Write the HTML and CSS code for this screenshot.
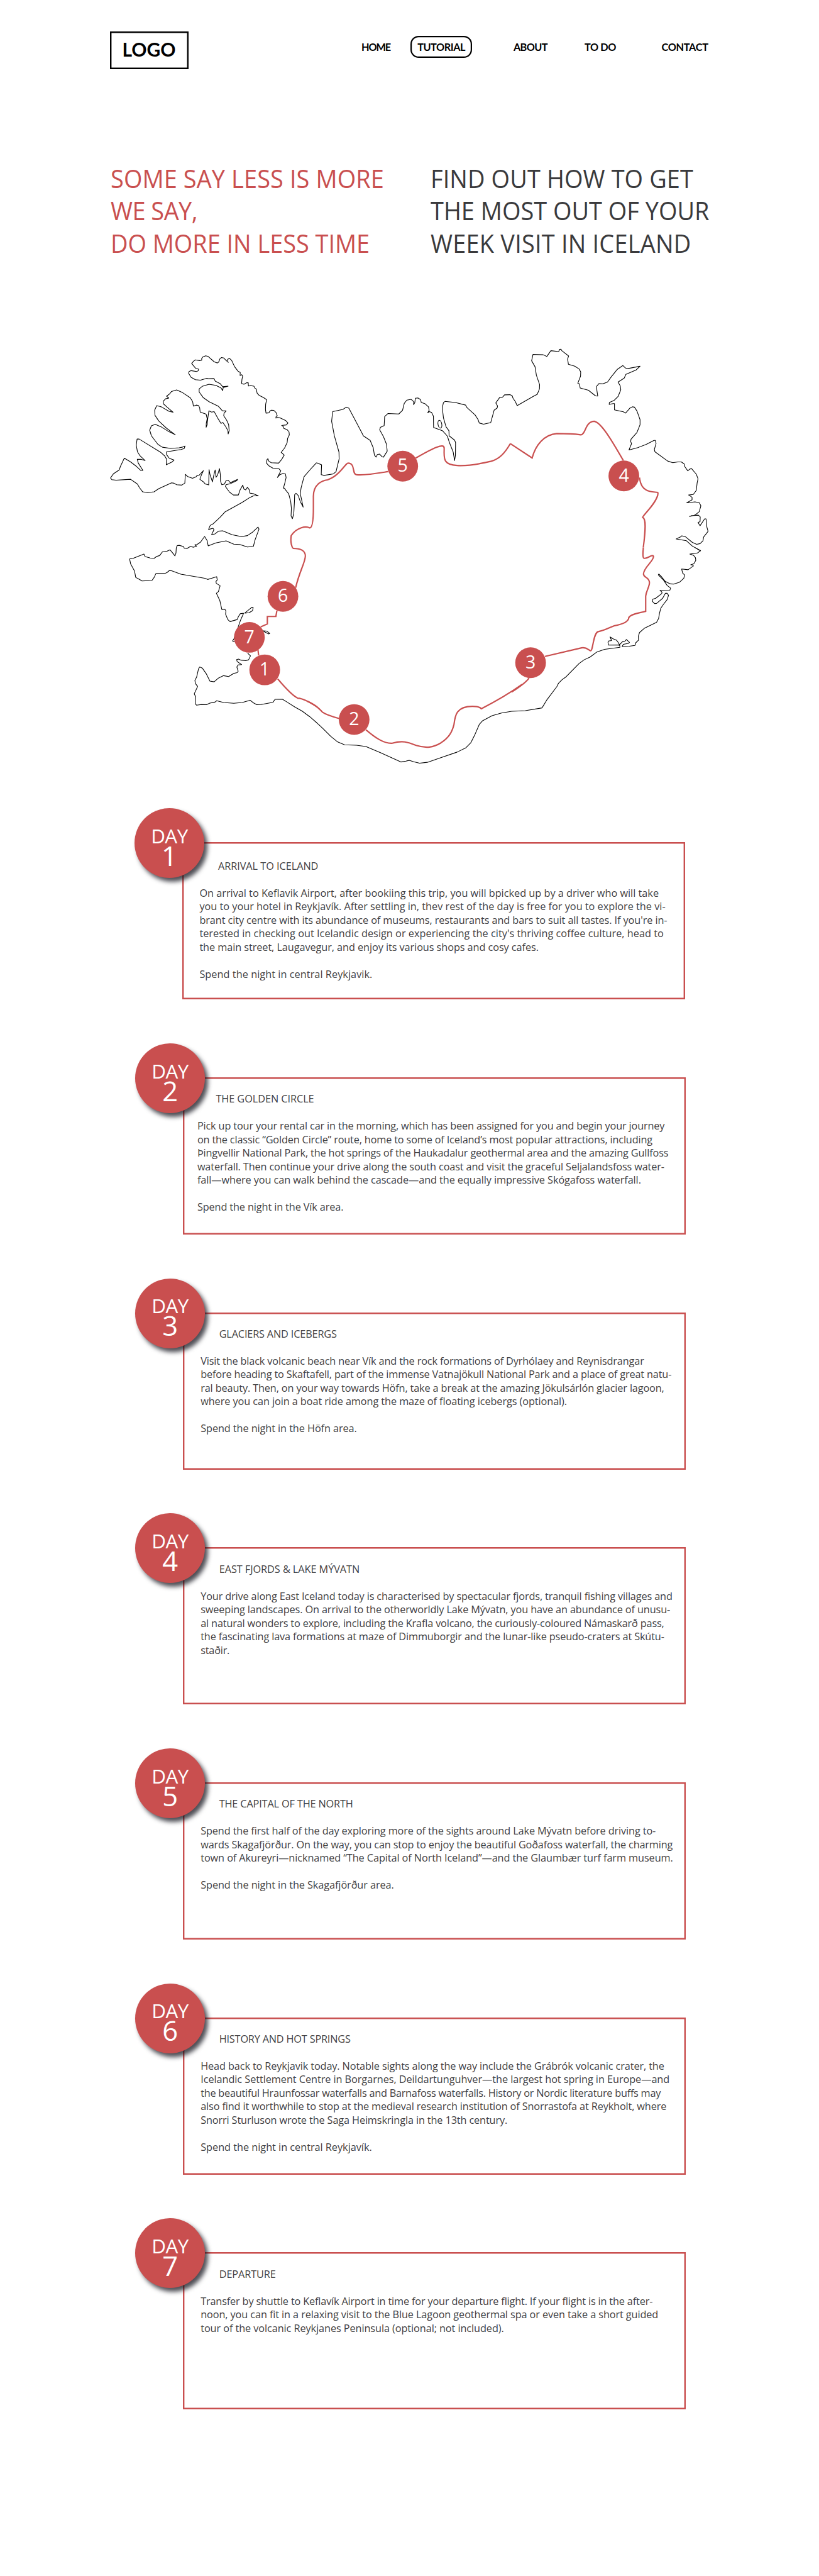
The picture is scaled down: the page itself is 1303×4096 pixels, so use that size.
FILE: index.html
```html
<!DOCTYPE html>
<html lang="en">
<head>
<meta charset="utf-8">
<title>Iceland in a week</title>
<link rel="stylesheet" href="styles.css">
</head>
<body>
<header class="top">
  <div class="logo">LOGO</div>
  <nav class="nav">
    <a class="home">HOME</a>
    <a class="pill">TUTORIAL</a>
    <a class="about">ABOUT</a>
    <a class="todo">TO DO</a>
    <a class="contact">CONTACT</a>
  </nav>
</header>
<section class="hero">
  <h1 class="claim"><span class="l1">SOME SAY LESS IS MORE</span><span class="l2">WE SAY,</span><span class="l3">DO MORE IN LESS TIME</span></h1>
  <p class="pitch"><span class="l1">FIND OUT HOW TO GET</span><span class="l2">THE MOST OUT OF YOUR</span><span class="l3">WEEK VISIT IN ICELAND</span></p>
</section>
<svg class="map" viewBox="0 0 3600 2550">
  <g class="coast">
    <path d="M1255,733 1225,765 1182,815 1165,880 1160,915 1168,950 1177,993 1160,960 1148,925 1135,912 1127,920 1126,960 1122,1030 1114,1061 1106,1045 1108,1000 1104,960 1092,915 1072,890 1068,882 1061,882 1070,850 1077,820 1073,798 1058,796 1040,803 1026,819 1037,798 1046,780 1035,768 1000,765 975,750 962,735 965,715 970,709 976,724 990,733 1033,735 1050,715 1066,688 1048,672 1068,647 1083,615 1086,590 1096,570 1094,552 1082,538 1064,532 1062,522 1051,514 1078,511 1088,500 1075,486 1040,469 1028,467 1017,471 1018,463 1025,458 1018,438 1005,426 990,425 980,432 977,440 959,442 956,420 957,390 963,363 945,351 918,337 907,325 902,300 895,297 888,284 870,281 856,283 855,264 845,264 830,273 816,268 818,245 822,225 817,217 807,221 808,204 795,196 775,170 757,132 745,121 735,126 730,137 738,144 725,133 712,119 698,116 689,123 682,142 674,148 655,141 620,110 605,106 588,113 582,121 582,132 570,134 545,130 535,137 523,151 547,180 564,184 561,194 552,198 520,193 508,198 505,208 520,232 545,246 575,249 612,238 620,241 655,240 661,254 690,269 705,287 737,284 708,292 705,310 695,294 665,279 625,273 585,285 567,300 567,318 590,350 625,375 680,402 703,428 725,429 713,443 711,457 728,483 740,510 743,545 737,564 736,545 722,520 706,497 695,502 680,478 655,433 640,436 624,429 618,470 614,510 608,525 609,500 614,475 608,448 573,436 570,410 563,397 550,395 533,401 529,375 515,352 470,322 435,306 405,315 395,328 376,343 389,354 370,358 356,373 358,388 380,408 414,437 390,431 345,405 318,398 306,425 308,455 330,488 375,530 427,569 405,558 385,548 345,523 310,508 287,516 277,542 287,575 325,625 352,642 400,649 450,645 470,641 484,635 479,650 460,655 375,669 376,685 392,707 420,717 410,727 374,745 376,712 365,693 343,673 215,594 203,594 198,630 205,668 220,692 250,720 228,713 204,713 210,735 237,778 225,778 200,755 165,728 128,706 105,755 98,775 65,797 47,822 55,832 80,835 165,830 205,858 218,880 235,903 265,908 303,903 330,885 405,851 420,853 435,862 465,864 483,852 486,801 500,814 528,824 548,816 556,806 568,805 592,779 580,805 571,830 592,845 602,857 623,863 625,773 630,800 645,845 652,810 661,775 666,818 675,805 686,767 691,800 692,840 700,862 715,858 725,838 737,835 750,850 792,830 788,838 750,855 725,862 721,872 745,905 768,922 797,922 807,892 823,864 830,888 840,892 850,877 860,890 865,911 885,914 914,927 885,927 865,936 820,965 720,1020 690,1052 650,1090 632,1100 622,1124 648,1117 654,1125 640,1154 660,1150 680,1134 705,1132 760,1155 815,1166 850,1160 880,1140 912,1110 918,1122 895,1185 885,1223 850,1227 805,1212 770,1210 725,1191 665,1203 620,1220 614,1190 599,1165 575,1198 555,1212 542,1214 552,1222 535,1228 515,1224 495,1236 480,1234 475,1224 450,1217 438,1219 433,1230 431,1262 425,1279 415,1266 396,1243"/>
    <path transform="translate(0 1230)" d="M396,13 380,21 352,25 335,47 318,52 303,63 280,61 250,53 243,38 180,63 159,67 165,95 188,138 195,175 215,186 232,196 290,193 303,175 313,153 365,153 380,145 392,135 405,136 460,156 600,180 617,187 640,180 670,171 673,190 665,200 668,210 690,224 680,258 668,268 688,310 700,363 718,362 724,372 722,390 735,422 748,434 790,422 797,405 808,388 828,385 M833,385 875,351 884,352 880,370 860,382 833,385 M828,385 810,425 795,468 771,535 763,548 775,553 M930,487 965,490 981,503 975,506 945,492 M851,618 868,635 857,658 840,663 812,660 798,654 787,657 790,668 816,686 795,688 788,700 796,725 790,733 770,738 740,756 710,751 680,765 655,787 630,783 610,742 585,706 570,700 563,712 552,760 542,778 545,797 558,814 538,858 547,875 544,915 552,924 580,920 610,921 630,912 660,906 670,898 710,908 770,913 820,908 866,895 885,910 905,921 930,920 1000,907 1012,890 1055,889 1080,904 1130,936 1170,958 1215,991 1260,1030"/>
    <path transform="translate(1200 1230)" d="M60,1030 90,1058 140,1108 180,1140 220,1156 290,1159 345,1166 430,1202 550,1257 580,1252 600,1247 625,1256 660,1264 705,1259 790,1230 880,1199 930,1175 960,1145 985,1095 1010,1037 1030,1015 1085,986 1140,970 1200,960 1280,956 1378,940"/>
    <path transform="translate(2400 1230)" d="M178,940 205,895 265,815 275,795 295,775 320,757 395,680 425,658 460,642 500,612 545,597 635,585 634,575 625,571 568,572 565,555 568,548 586,545 577,524 595,535 615,543 626,558 632,570 650,552 665,548 673,539 691,556 685,562 655,567 648,580 690,578 723,574 728,558 744,543 743,520 750,498 780,472 850,438 862,415 867,385 875,355 890,333 912,305 920,280 912,268 902,268 885,298 850,327 838,328 825,315 828,303 845,297 880,270 882,262 870,251 928,250 932,238 912,222 890,190 860,160 863,155 878,170 900,198 930,213 950,214 985,203 1010,180 1014,160 1003,150 997,126 1035,130 1066,108 1062,103 1050,101 1068,95 1080,75 1078,60 1067,46 1045,38 1090,32 1108,18 1075,0"/>
    <path transform="translate(2400 0)" d="M1108,1250 1075,1230 1060,1222 1025,1190 965,1180 990,1168 998,1161 1020,1167 1060,1200 1085,1211 1105,1207 1122,1190 1126,1168 1152,1135 1145,1110 1140,1062 1132,1062 1105,1102 1093,1083 1105,1078 1106,1050 1095,1040 1055,1043 1043,1048 1075,1040 1100,1020 1110,985 1100,967 1075,962 1027,968 1058,950 1058,935 1038,922 1065,919 1083,895 1088,850 1093,827 1083,800 1055,767 1045,770 1033,780 1015,755 1012,740 995,728 975,728 945,733 915,723 840,668 837,655 847,620 843,602 835,602 790,625 740,644 688,658 703,621 698,608 700,595 735,555 753,510 753,480 735,430 720,407 708,405 693,413 668,442 655,434 603,423 603,386 595,386 572,391 573,380 600,368 625,343 640,305 637,283 624,260 660,237 670,215 730,189 753,167 680,181 668,178 652,163 620,185 585,228 562,260 535,270 512,269 498,285 500,310 505,342 492,341 450,308 402,295 397,270 388,267 404,225 405,200 395,183 370,167 333,156 328,125 334,107 295,77 289,67 281,68 276,81 230,76 206,110 185,100 125,98 117,135 137,170 145,220 164,275 163,300 150,332 130,342 32,398"/>
    <path transform="translate(1200 0)" d="M1232,398 1222,375 1208,355 1203,340 1190,334 1158,335 1147,348 1130,350 1107,382 1117,400 1115,412 1097,425 1077,498 1035,507 1010,500 1003,480 985,452 938,410 930,395 870,380 810,373 800,380 793,410 800,470 815,522 832,545 833,575 865,600 871,615 870,690 865,720 857,670 835,615 823,577 795,546 742,526 741,460 730,438 717,433 708,440 716,425 712,405 690,386 670,380 665,362 650,353 635,355 632,380 625,393 625,375 610,361 585,366 570,385 560,425 538,447 475,444 455,462 452,515 430,525 426,540 448,580 466,625 470,665 448,700 440,698 425,682 412,685 405,700 395,688 388,645 370,602 330,575 320,555 245,413 230,407 210,420 150,433 144,490 160,575 187,670 188,710 170,785 155,798 100,807 83,803 85,745 55,733"/>
    <ellipse cx="1979" cy="507" rx="11" ry="23" transform="rotate(-10 1979 507)"/>
  </g>
  <g class="route">
    <path transform="translate(0 1230)" d="M912,600 916,632 M1028,770 C1070,820 1110,865 1145,883 C1180,885 1215,905 1260,935"/>
    <path transform="translate(1200 1230)" d="M0,900 C40,918 65,935 90,965 C115,982 150,992 188,1002 M345,1068 C400,1115 450,1150 500,1147 C560,1130 590,1140 640,1160 C700,1178 740,1172 785,1145 C830,1115 850,1085 862,1035 C868,985 875,931 970,931 C1000,931 1015,936 1022,945 C1110,900 1180,860 1260,803"/>
    <path transform="translate(2400 1230)" d="M0,847 C50,815 85,790 102,765 M195,638 L410,588 C440,583 450,600 463,605 C478,605 478,495 510,492 C540,488 560,475 600,459 C640,452 687,437 687,410 C700,390 750,382 786,374 V285 C790,250 809,230 808,205 C806,170 775,180 773,155 C775,115 833,80 832,52 C825,35 795,70 775,62 C765,55 772,20 772,0"/>
    <path transform="translate(2400 0)" d="M772,1230 C785,1130 790,1060 768,1053 C765,1045 860,960 858,910 C860,895 760,930 750,820 M655,720 C600,625 530,500 485,490 C430,490 435,570 405,569 C360,563 300,562 265,562 C190,568 140,630 120,705 L-8,621"/>
    <path transform="translate(1200 0)" d="M1192,621 C1160,675 1130,710 1080,724 C1000,743 930,752 880,749 C790,745 805,700 804,645 C800,620 750,640 638,705 M475,785 C400,797 340,808 290,803 C262,800 285,735 240,735 C225,735 190,810 120,833 C85,838 37,860 37,930 V1000 C37,1060 33,1115 15,1115 C-5,1103 -60,1110 -93,1160 C-97,1185 -97,1210 -83,1235"/>
    <path transform="translate(0 1230)" d="M1117,5 C1150,5 1190,12 1190,50 C1188,90 1155,140 1133,235 M1023,370 L1017,404 H967 V448 L928,465"/>
  </g>
  <g class="stops">
    <circle cx="951.5" cy="1947" r="90"/><text x="951" y="1980">1</text>
    <circle cx="1476" cy="2238" r="90"/><text x="1476" y="2271">2</text>
    <circle cx="2511" cy="1905" r="90"/><text x="2511" y="1938">3</text>
    <circle cx="3058" cy="810" r="90"/><text x="3058" y="844">4</text>
    <circle cx="1761" cy="753" r="90"/><text x="1761" y="786">5</text>
    <circle cx="1058.5" cy="1516" r="90"/><text x="1058" y="1548">6</text>
    <circle cx="861.5" cy="1756.5" r="90"/><text x="861" y="1790">7</text>
  </g>
</svg>
<main class="days">
  <article class="day d1">
    <div class="badge"><span class="word">DAY</span><span class="num">1</span></div>
    <h2>ARRIVAL TO ICELAND</h2>
    <p><span class="l1">On arrival to Keflavik Airport, after bookiing this trip, you will bpicked up by a driver who will take</span><span class="l2">you to your hotel in Reykjavík. After settling in, thev rest of the day is free for you to explore the vi-</span><span class="l3">brant city centre with its abundance of museums, restaurants and bars to suit all tastes. If you're in-</span><span class="l4">terested in checking out Icelandic design or experiencing the city's thriving coffee culture, head to</span><span class="l5">the main street, Laugavegur, and enjoy its various shops and cosy cafes.</span></p>
    <p><span class="l6">Spend the night in central Reykjavik.</span></p>
  </article>
  <article class="day d2">
    <div class="badge"><span class="word">DAY</span><span class="num">2</span></div>
    <h2>THE GOLDEN CIRCLE</h2>
    <p><span class="l1">Pick up tour your rental car in the morning, which has been assigned for you and begin your journey</span><span class="l2">on the classic “Golden Circle” route, home to some of Iceland’s most popular attractions, including</span><span class="l3">Þingvellir National Park, the hot springs of the Haukadalur geothermal area and the amazing Gullfoss</span><span class="l4">waterfall. Then continue your drive along the south coast and visit the graceful Seljalandsfoss water-</span><span class="l5">fall—where you can walk behind the cascade—and the equally impressive Skógafoss waterfall.</span></p>
    <p><span class="l6">Spend the night in the Vík area.</span></p>
  </article>
  <article class="day d3">
    <div class="badge"><span class="word">DAY</span><span class="num">3</span></div>
    <h2>GLACIERS AND ICEBERGS</h2>
    <p><span class="l1">Visit the black volcanic beach near Vík and the rock formations of Dyrhólaey and Reynisdrangar</span><span class="l2">before heading to Skaftafell, part of the immense Vatnajökull National Park and a place of great natu-</span><span class="l3">ral beauty. Then, on your way towards Höfn, take a break at the amazing Jökulsárlón glacier lagoon,</span><span class="l4">where you can join a boat ride among the maze of floating icebergs (optional).</span></p>
    <p><span class="l5">Spend the night in the Höfn area.</span></p>
  </article>
  <article class="day d4">
    <div class="badge"><span class="word">DAY</span><span class="num">4</span></div>
    <h2>EAST FJORDS &amp; LAKE MÝVATN</h2>
    <p><span class="l1">Your drive along East Iceland today is characterised by spectacular fjords, tranquil fishing villages and</span><span class="l2">sweeping landscapes. On arrival to the otherworldly Lake Mývatn, you have an abundance of unusu-</span><span class="l3">al natural wonders to explore, including the Krafla volcano, the curiously-coloured Námaskarð pass,</span><span class="l4">the fascinating lava formations at maze of Dimmuborgir and the lunar-like pseudo-craters at Skútu-</span><span class="l5">staðir.</span></p>
  </article>
  <article class="day d5">
    <div class="badge"><span class="word">DAY</span><span class="num">5</span></div>
    <h2>THE CAPITAL OF THE NORTH</h2>
    <p><span class="l1">Spend the first half of the day exploring more of the sights around Lake Mývatn before driving to-</span><span class="l2">wards Skagafjörður. On the way, you can stop to enjoy the beautiful Goðafoss waterfall, the charming</span><span class="l3">town of Akureyri—nicknamed “The Capital of North Iceland”—and the Glaumbær turf farm museum.</span></p>
    <p><span class="l4">Spend the night in the Skagafjörður area.</span></p>
  </article>
  <article class="day d6">
    <div class="badge"><span class="word">DAY</span><span class="num">6</span></div>
    <h2>HISTORY AND HOT SPRINGS</h2>
    <p><span class="l1">Head back to Reykjavik today. Notable sights along the way include the Grábrók volcanic crater, the</span><span class="l2">Icelandic Settlement Centre in Borgarnes, Deildartunguhver—the largest hot spring in Europe—and</span><span class="l3">the beautiful Hraunfossar waterfalls and Barnafoss waterfalls. History or Nordic literature buffs may</span><span class="l4">also find it worthwhile to stop at the medieval research institution of Snorrastofa at Reykholt, where</span><span class="l5">Snorri Sturluson wrote the Saga Heimskringla in the 13th century.</span></p>
    <p><span class="l6">Spend the night in central Reykjavík.</span></p>
  </article>
  <article class="day d7">
    <div class="badge"><span class="word">DAY</span><span class="num">7</span></div>
    <h2>DEPARTURE</h2>
    <p><span class="l1">Transfer by shuttle to Keflavík Airport in time for your departure flight. If your flight is in the after-</span><span class="l2">noon, you can fit in a relaxing visit to the Blue Lagoon geothermal spa or even take a short guided</span><span class="l3">tour of the volcanic Reykjanes Peninsula (optional; not included).</span></p>
  </article>
</main>
</body>
</html>
```
FILE: styles.css
```css
* { box-sizing: border-box; }
body { margin: 0; background: #fff; color: #3f4042; font-family: "Open Sans", "Noto Sans", sans-serif; height: 4096px; }

/* header */
.top { display: flex; align-items: flex-start; padding: 49.6px 0 0 175px; height: 110px; color: #000; font-family: Lato, sans-serif; }
.logo { width: 125.4px; height: 60.4px; padding: 0 1.4px 4px 0; box-shadow: inset 0 0 0 2.4px #000; display: flex; align-items: center; justify-content: center; font-size: 30px; line-height: 36px; font-weight: 700; white-space: nowrap; }
.nav { display: flex; align-items: center; height: 36px; margin-top: 7px; font-size: 16.3px; line-height: 20px; font-weight: 700; white-space: nowrap; }
.home { margin-left: 274.5px; width: 47px; letter-spacing: -1.04px; }
.pill { width: 97.5px; height: 35.5px; margin-left: 31.5px; box-shadow: inset 0 0 0 2.2px #000; border-radius: 13px; display: flex; align-items: center; justify-content: center; letter-spacing: -.43px; }
.about { margin-left: 66px; width: 54px; letter-spacing: -.6px; }
.todo { margin-left: 59px; width: 50.2px; letter-spacing: -.36px; }
.contact { margin-left: 72.5px; letter-spacing: -.33px; }

/* intro */
.hero { display: grid; grid-template-columns: 509px 460px; padding-left: 175.5px; margin-top: 147.8px; font-size: 41px; line-height: 51.5px; white-space: nowrap; }
.hero span, .day p span { display: block; width: max-content; }
.claim, .pitch { margin: 0; font: inherit; transform: scaleX(.925); transform-origin: 0 0; }
.claim { color: #c94f4f; }
.claim .l1 { letter-spacing: .11px; }
.claim .l2 { letter-spacing: -.57px; }
.claim .l3 { letter-spacing: -.04px; }
.pitch { color: #3a3a3c; }
.pitch .l1 { letter-spacing: .11px; }
.pitch .l3 { letter-spacing: .23px; }

/* map */
.map { display: block; width: 976.6px; height: 691.7px; margin: 124.8px 0 0 162.8px; overflow: visible; }
.coast { fill: none; stroke: #000; stroke-width: 4; stroke-linejoin: round; }
.route { fill: none; stroke: #c94f4f; stroke-width: 8; }
.stops circle { fill: #c94f4f; }
.stops text { fill: #fff; font-size: 105px; text-anchor: middle; }

/* itinerary */
.days { display: flex; flex-direction: column; gap: 123.65px; padding: 110.7px 0 0 291.2px; }
.day { position: relative; width: 800px; height: 250px; flex: none; box-shadow: inset 0 0 0 2.4px #c94f4f; padding: 24.2px 0 0 28px; font-size: 16.3px; line-height: 21.5px; white-space: nowrap; }
.day h2 { margin: 0 0 21.5px 29.5px; font: inherit; }
.day p { margin: 0 0 21.5px; }
.day.d1 { margin-left: -1.2px; padding-top: 27.4px; padding-left: 27.4px; }
.day.d2 { padding-left: 22.7px; }
.badge { position: absolute; left: -76.1px; top: -54px; width: 111px; height: 111px; padding-top: 24.6px; border-radius: 50%; background: #c94f4f; color: #fff; text-align: center; box-shadow: 5px 6px 7px rgba(20, 20, 30, .75); }
.badge span { display: block; width: max-content; margin: 0 auto; }
.word { font-size: 31.4px; line-height: 37px; letter-spacing: -.56px; }
.num { font-size: 43.5px; line-height: 28px; }

/* tracking of headings and lines */
.d1 h2 { letter-spacing: -.042px; }
.d1 .l1, .d1 .l2 { letter-spacing: -.012px; }
.d1 .l3 { letter-spacing: -.096px; }
.d1 .l4 { letter-spacing: .018px; }
.d1 .l5 { letter-spacing: -.079px; }
.d1 .l6 { letter-spacing: .039px; }
.d2 h2 { letter-spacing: -.063px; }
.d2 .l1, .d2 .l3 { letter-spacing: -.152px; }
.d2 .l2 { letter-spacing: -.167px; }
.d2 .l4 { letter-spacing: -.141px; }
.d2 .l5 { letter-spacing: -.085px; }
.d2 .l6 { letter-spacing: -.127px; }
.d3 h2 { letter-spacing: -.167px; }
.d3 .l1 { letter-spacing: -.152px; }
.d3 .l2 { letter-spacing: -.164px; }
.d3 .l3 { letter-spacing: -.142px; }
.d3 .l4, .d3 .l5 { letter-spacing: -.088px; }
.d4 h2 { letter-spacing: -.061px; }
.d4 .l1, .d4 .l4 { letter-spacing: -.144px; }
.d4 .l2 { letter-spacing: -.125px; }
.d4 .l3 { letter-spacing: -.17px; }
.d4 .l5 { letter-spacing: -.203px; }
.d5 h2 { letter-spacing: -.151px; }
.d5 .l1 { letter-spacing: -.123px; }
.d5 .l2 { letter-spacing: -.165px; }
.d5 .l3 { letter-spacing: -.095px; }
.d5 .l4 { letter-spacing: -.087px; }
.d6 h2 { letter-spacing: -.187px; }
.d6 .l1 { letter-spacing: -.125px; }
.d6 .l2 { letter-spacing: -.065px; }
.d6 .l3 { letter-spacing: -.248px; }
.d6 .l4 { letter-spacing: -.144px; }
.d6 .l5 { letter-spacing: -.133px; }
.d6 .l6 { letter-spacing: -.028px; }
.d7 h2 { letter-spacing: -.104px; }
.d7 .l1 { letter-spacing: -.168px; }
.d7 .l2 { letter-spacing: -.109px; }
.d7 .l3 { letter-spacing: -.088px; }
```
